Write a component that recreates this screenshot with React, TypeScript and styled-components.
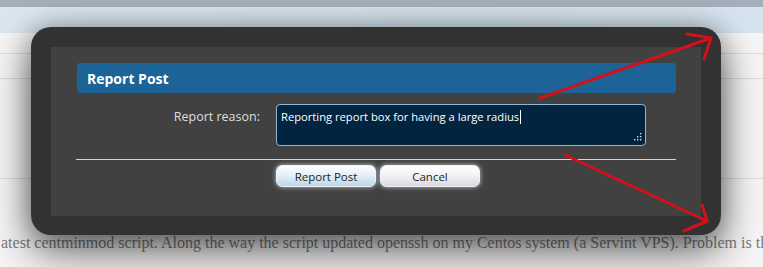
import styled, { createGlobalStyle } from 'styled-components';

const GlobalStyle = createGlobalStyle`
  html, body {
    margin: 0;
    padding: 0;
    background: #f4f4f4;
  }
`;

const Page = styled.div`
  position: relative;
  width: 763px;
  height: 267px;
  overflow: hidden;
  background: #f5f5f5;
`;

const TopBar = styled.div`
  height: 7px;
  background: #a4afb9;
`;

const Banner = styled.div`
  height: 26px;
  background: linear-gradient(to right, #dbe7f0, #d2e1ec 60%, #d6e4ef);
`;

const Content = styled.div`
  display: flex;
  flex-direction: column;
`;

const Rule = styled.div<{ $gap: number }>`
  margin-top: ${(p) => p.$gap}px;
  height: 1px;
  background: #dcdcdc;
`;

const PostText = styled.p`
  margin: 55px 0 0 1px;
  white-space: nowrap;
  overflow: hidden;
  font-family: 'Liberation Serif', 'DejaVu Serif', serif;
  font-size: 16px;
  color: #7b7b7b;
`;

const Modal = styled.div`
  position: absolute;
  left: 31px;
  top: 27px;
  width: 690px;
  height: 208px;
  box-sizing: border-box;
  padding: 20px 20px 19px;
  border-radius: 20px;
  background: #323232;
  box-shadow: 0 18px 40px rgba(0, 0, 0, 0.55), 0 0 26px rgba(0, 0, 0, 0.3);
`;

const Panel = styled.div`
  height: 100%;
  box-sizing: border-box;
  padding: 16px 25px 0 26px;
  background: #414141;
  font-family: 'Open Sans', 'Noto Sans', sans-serif;
`;

const Header = styled.h2`
  margin: 0;
  height: 30px;
  padding-left: 10px;
  display: flex;
  align-items: center;
  border-radius: 3px;
  background: #1c6397;
  color: #fff;
  font-size: 14px;
  font-weight: 700;
`;

const FormRow = styled.div`
  display: grid;
  grid-template-columns: 183px 370px;
  column-gap: 16px;
  margin-top: 11px;
`;

const Label = styled.label`
  text-align: right;
  padding-top: 4px;
  color: #dedede;
  font-size: 12.5px;
`;

const TextBox = styled.div`
  position: relative;
  height: 42px;
  box-sizing: border-box;
  padding: 4px 4px;
  border: 1px solid #91b6d3;
  border-radius: 4px;
  background: #03243f;
  color: #fff;
  font-size: 11.2px;
  line-height: 16px;
`;

const Caret = styled.span`
  display: inline-block;
  width: 1px;
  height: 14px;
  margin-left: 1px;
  vertical-align: -3px;
  background: #fff;
`;

const Grip = styled.svg`
  position: absolute;
  right: 3px;
  bottom: 3px;
`;

const Divider = styled.hr`
  margin: 13px 0 0 -1px;
  width: 600px;
  height: 1px;
  border: none;
  background: #cfd6db;
`;

const Buttons = styled.div`
  display: flex;
  gap: 4px;
  margin: 5px 0 0 199px;
`;

const Button = styled.button<{ $primary?: boolean }>`
  width: 100px;
  height: 22px;
  padding: 0;
  border: 1px solid #eef2f6;
  border-radius: 6px;
  background: ${(p) =>
    p.$primary
      ? 'linear-gradient(to bottom, #fbfdff, #e6f0f8 45%, #b9d7ec)'
      : 'linear-gradient(to bottom, #ffffff, #f3f3f6 45%, #d9d9e1)'};
  box-shadow: 0 0 5px rgba(255, 255, 255, 0.7);
  color: #1d1d1d;
  font-family: 'Open Sans', 'Noto Sans', sans-serif;
  font-size: 11.5px;
`;

const Annotations = styled.svg`
  position: absolute;
  left: 0;
  top: 0;
  pointer-events: none;
`;

export default function App() {
  return (
    <>
      <GlobalStyle />
      <Page>
        <TopBar />
        <Banner />
        <Content>
          <Rule $gap={20} />
          <Rule $gap={24} />
          <Rule $gap={99} />
          <PostText>
            atest centminmod script. Along the way the script updated openssh on my Centos system (a
            Servint VPS). Problem is th
          </PostText>
        </Content>

        <Modal>
          <Panel>
            <Header>Report Post</Header>
            <FormRow>
              <Label>Report reason:</Label>
              <TextBox>
                Reporting report box for having a large radius
                <Caret />
                <Grip width="9" height="9" viewBox="0 0 9 9">
                  <g fill="#c9d6e2">
                    <rect x="7" y="0" width="1.4" height="1.4" />
                    <rect x="4" y="3" width="1.4" height="1.4" />
                    <rect x="7" y="3" width="1.4" height="1.4" />
                    <rect x="1" y="6" width="1.4" height="1.4" />
                    <rect x="4" y="6" width="1.4" height="1.4" />
                    <rect x="7" y="6" width="1.4" height="1.4" />
                  </g>
                </Grip>
              </TextBox>
            </FormRow>
            <Divider />
            <Buttons>
              <Button $primary>Report Post</Button>
              <Button>Cancel</Button>
            </Buttons>
          </Panel>
        </Modal>

        <Annotations width="763" height="267" viewBox="0 0 763 267">
          <g stroke="#d1121b" strokeWidth="3" fill="none" strokeLinecap="round" strokeLinejoin="round">
            <path d="M540 98 L711 38" />
            <path d="M687 34 L711 38 L704 59" />
            <path d="M565 155 L707 221" />
            <path d="M702 205 L707 221 L684 231" />
          </g>
        </Annotations>
      </Page>
    </>
  );
}
